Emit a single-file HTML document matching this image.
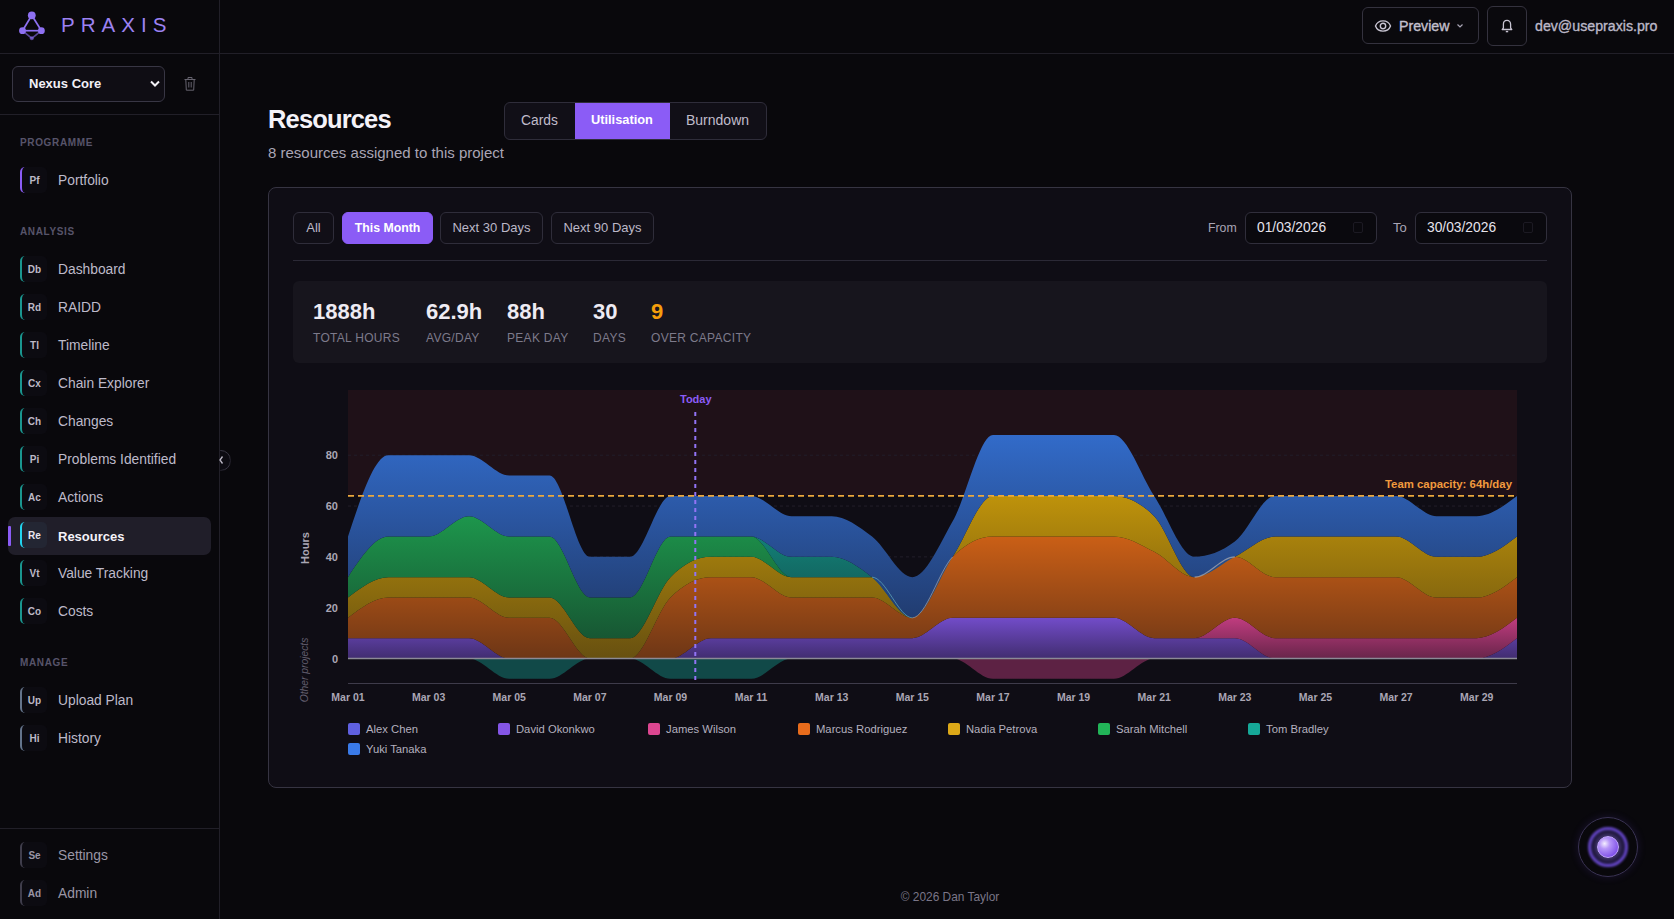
<!DOCTYPE html>
<html><head><meta charset="utf-8">
<style>
*{box-sizing:border-box;margin:0;padding:0}
html,body{width:1674px;height:919px;overflow:hidden;background:#09080c;font-family:"Liberation Sans",sans-serif;color:#e6e3ec}
.abs{position:absolute}
.t{position:absolute;white-space:nowrap;line-height:1}
#side{position:absolute;left:0;top:0;width:220px;height:919px;border-right:1px solid #211f28;background:#09080c}
.hline{position:absolute;height:1px;background:#211f28}
.sec{position:absolute;left:20px;font-size:10px;font-weight:bold;letter-spacing:0.65px;color:#57546a;line-height:1}
.nav{position:absolute;left:0;width:220px;height:38px}
.badge{position:absolute;left:20px;top:6px;width:27px;height:26px;border-left:2.5px solid #1a968f;border-radius:5px;background:#0c0b11}
.badge span{position:absolute;left:0;right:0;top:9px;text-align:center;font-size:10px;font-weight:bold;color:#bdb9c6;line-height:1}
.lbl{position:absolute;left:58px;top:13px;font-size:13.8px;color:#bebaca;line-height:1;white-space:nowrap}
.btn{position:absolute;border:1px solid #34323e;border-radius:6px;background:#0a090d}
.ftab{position:absolute;top:212px;height:32px;border:1px solid #2f2d3a;border-radius:6px;font-size:13px;color:#bcb8c8;text-align:center;line-height:30px;background:#110f17}
.stat-v{position:absolute;top:301px;font-size:22px;font-weight:bold;color:#eeebf3;line-height:1}
.stat-l{position:absolute;top:332px;font-size:12px;letter-spacing:0.3px;color:#7d7a8b;line-height:1;white-space:nowrap}
.leg{position:absolute;font-size:11.25px;color:#b4b0bf;line-height:1;white-space:nowrap}
.leg i{position:absolute;left:0;top:-1px;width:12px;height:12px;border-radius:2px}
.leg span{position:absolute;left:18px;top:0}
</style></head><body>


<div id="side">
  <svg class="abs" style="left:14px;top:6px" width="36" height="40" viewBox="14 6 36 40">
    <g stroke="#8e70f2" stroke-width="1.7" fill="none">
      <line x1="31.8" y1="15.3" x2="22.5" y2="30.7"/>
      <line x1="31.8" y1="15.3" x2="41.4" y2="30.7"/>
      <line x1="22.5" y1="30.7" x2="41.4" y2="30.7"/>
      <line x1="22.5" y1="30.7" x2="31.8" y2="38.3" stroke-opacity="0.6"/>
      <line x1="41.4" y1="30.7" x2="31.8" y2="38.3" stroke-opacity="0.6"/>
    </g>
    <circle cx="31.8" cy="15.3" r="3.9" fill="#8e70f2"/>
    <circle cx="22.5" cy="30.7" r="3.4" fill="#8e70f2"/>
    <circle cx="41.4" cy="30.7" r="3.4" fill="#8e70f2"/>
    <circle cx="31.8" cy="38.3" r="2" fill="#8b6cf0" fill-opacity="0.6"/>
  </svg>
  <div class="t" style="left:61px;top:15px;font-size:20.5px;letter-spacing:6.05px;color:#9c82f2">PRAXIS</div>

  <div class="abs" style="left:12px;top:66px;width:153px;height:36px;border:1px solid #383644;border-radius:6px;background:#0f0d14"></div>
  <div class="t" style="left:29px;top:77px;font-size:13px;font-weight:bold;color:#f2f0f6">Nexus Core</div>
  <svg class="abs" style="left:149px;top:79px" width="12" height="10" viewBox="0 0 12 10"><path d="M2 2.5 L6 6.5 L10 2.5" stroke="#f2f0f6" stroke-width="2" fill="none"/></svg>
  <svg class="abs" style="left:182px;top:75px" width="16" height="17" viewBox="0 0 16 17"><g stroke="#66636f" stroke-width="1" fill="none" stroke-linejoin="round"><path d="M2.5 4.5 H13.5"/><path d="M6 4.5 V2.5 H10 V4.5"/><path d="M3.8 4.5 L4.3 15.2 H11.7 L12.2 4.5"/><path d="M6.8 7 V12.5 M9.2 7 V12.5"/></g></svg>
  <div class="hline" style="left:0;top:114px;width:219px"></div>

  <div class="sec" style="top:138px">PROGRAMME</div>
  <div class="nav" style="top:161px"><div class="badge" style="border-left-color:#8b5cf6"><span>Pf</span></div><div class="lbl">Portfolio</div></div>

  <div class="sec" style="top:227px">ANALYSIS</div>
  <div class="nav" style="top:250px"><div class="badge"><span>Db</span></div><div class="lbl">Dashboard</div></div>
  <div class="nav" style="top:288px"><div class="badge"><span>Rd</span></div><div class="lbl">RAIDD</div></div>
  <div class="nav" style="top:326px"><div class="badge"><span>Tl</span></div><div class="lbl">Timeline</div></div>
  <div class="nav" style="top:364px"><div class="badge"><span>Cx</span></div><div class="lbl">Chain Explorer</div></div>
  <div class="nav" style="top:402px"><div class="badge"><span>Ch</span></div><div class="lbl">Changes</div></div>
  <div class="nav" style="top:440px"><div class="badge"><span>Pi</span></div><div class="lbl">Problems Identified</div></div>
  <div class="nav" style="top:478px"><div class="badge"><span>Ac</span></div><div class="lbl">Actions</div></div>
  <div class="abs" style="left:8px;top:517px;width:203px;height:38px;border-radius:7px;background:#201e29"></div>
  <div class="abs" style="left:8px;top:526px;width:3px;height:20px;border-radius:1px;background:#8b5cf6"></div>
  <div class="nav" style="top:516px"><div class="badge" style="border-left-color:#22d3ee;background:#232633"><span style="color:#e8e5ee">Re</span></div><div class="lbl" style="color:#f4f2f8;font-weight:bold;font-size:13px;top:13.5px">Resources</div></div>
  <div class="nav" style="top:554px"><div class="badge"><span>Vt</span></div><div class="lbl">Value Tracking</div></div>
  <div class="nav" style="top:592px"><div class="badge"><span>Co</span></div><div class="lbl">Costs</div></div>

  <div class="sec" style="top:658px">MANAGE</div>
  <div class="nav" style="top:681px"><div class="badge" style="border-left-color:#64748b"><span>Up</span></div><div class="lbl">Upload Plan</div></div>
  <div class="nav" style="top:719px"><div class="badge" style="border-left-color:#64748b"><span>Hi</span></div><div class="lbl">History</div></div>

  <div class="hline" style="left:0;top:828px;width:219px"></div>
  <div class="nav" style="top:836px"><div class="badge" style="border-left-color:#3f3d4b"><span style="color:#9a96a6">Se</span></div><div class="lbl" style="color:#9a96a6">Settings</div></div>
  <div class="nav" style="top:874px"><div class="badge" style="border-left-color:#3f3d4b"><span style="color:#9a96a6">Ad</span></div><div class="lbl" style="color:#9a96a6">Admin</div></div>
</div>
<!-- header line -->
<div class="hline" style="left:0;top:53px;width:1674px"></div>
<!-- collapse toggle -->
<div class="abs" style="left:210px;top:450px;width:20.5px;height:20.5px;border-radius:50%;border:1.2px solid #3a3846;background:#0c0b12;clip-path:inset(0 0 0 10px)"></div>
<svg class="abs" style="left:219px;top:453px" width="10" height="14" viewBox="0 0 10 14"><path d="M3.5 3.5 L1 7 L3.5 10.5" stroke="#bcb8c6" stroke-width="1.3" fill="none"/></svg>

<!-- header right -->
<div class="btn" style="left:1362px;top:7px;width:117px;height:37px"></div>
<svg class="abs" style="left:1374px;top:18px" width="18" height="16" viewBox="0 0 18 16"><path d="M1.5 8 C4 1.2 14 1.2 16.5 8 C14 14.8 4 14.8 1.5 8 Z" stroke="#c8c4d2" stroke-width="1.4" fill="none"/><circle cx="9" cy="8" r="2.7" stroke="#c8c4d2" stroke-width="1.4" fill="none"/></svg>
<div class="t" style="left:1399px;top:18.5px;font-size:14.2px;color:#c4c0ce;-webkit-text-stroke:0.35px #c4c0ce">Preview</div>
<svg class="abs" style="left:1455px;top:22px" width="10" height="8" viewBox="0 0 10 8"><path d="M2.5 2.5 L5 5 L7.5 2.5" stroke="#a8a4b4" stroke-width="1.2" fill="none"/></svg>
<div class="btn" style="left:1487px;top:6px;width:40px;height:40px"></div>
<svg class="abs" style="left:1499px;top:17px" width="16" height="18" viewBox="0 0 16 18"><path d="M3.2 12.5 H12.8 L11.6 10.8 V7.2 C11.6 4.9 10 3.3 8 3.3 C6 3.3 4.4 4.9 4.4 7.2 V10.8 Z" stroke="#c8c4d2" stroke-width="1.3" fill="none" stroke-linejoin="round"/><path d="M6.8 14.6 H9.2" stroke="#c8c4d2" stroke-width="1.4"/></svg>
<div class="t" style="left:1535px;top:18.5px;font-size:14.2px;color:#bcb8c8;-webkit-text-stroke:0.35px #bcb8c8">dev@usepraxis.pro</div>

<!-- title -->
<div class="t" style="left:268px;top:107px;font-size:25.5px;letter-spacing:-0.85px;font-weight:bold;color:#f4f2f8">Resources</div>
<div class="t" style="left:268px;top:145px;font-size:15px;color:#a9a5b5">8 resources assigned to this project</div>

<!-- tabs -->
<div class="abs" style="left:504px;top:102px;width:263px;height:38px;border:1px solid #2f2d3a;border-radius:6px;background:#110f17;overflow:hidden">
  <div class="abs" style="left:70px;top:0;width:95px;height:36px;background:#8b5cf6"></div>
</div>
<div class="t" style="left:521px;top:114px;font-size:13.8px;color:#c0bccb">Cards</div>
<div class="t" style="left:591px;top:114px;font-size:12.8px;font-weight:bold;color:#ffffff">Utilisation</div>
<div class="t" style="left:686px;top:113px;font-size:14px;color:#c0bccb">Burndown</div>

<!-- card -->
<div class="abs" style="left:268px;top:187px;width:1304px;height:601px;border:1px solid #363442;border-radius:8px;background:#0f0d15"></div>

<div class="ftab" style="left:293px;width:41px">All</div>
<div class="ftab" style="left:342px;width:91px;background:#8b5cf6;border-color:#8b5cf6;color:#fff;font-weight:bold;font-size:12.3px">This Month</div>
<div class="ftab" style="left:440px;width:103px">Next 30 Days</div>
<div class="ftab" style="left:551px;width:103px">Next 90 Days</div>

<div class="t" style="left:1208px;top:221.5px;font-size:12.3px;color:#a9a5b5">From</div>
<div class="abs" style="left:1245px;top:212px;width:132px;height:32px;border:1px solid #302e3b;border-radius:6px;background:#0a090e"></div>
<div class="t" style="left:1257px;top:221px;font-size:13.8px;color:#e6e3ec">01/03/2026</div>
<div class="abs" style="left:1353px;top:222px;width:10px;height:11px;border:1.5px solid #1c1a23;border-radius:2px"></div>
<div class="t" style="left:1393px;top:221px;font-size:13px;color:#a9a5b5">To</div>
<div class="abs" style="left:1415px;top:212px;width:132px;height:32px;border:1px solid #302e3b;border-radius:6px;background:#0a090e"></div>
<div class="t" style="left:1427px;top:221px;font-size:13.8px;color:#e6e3ec">30/03/2026</div>
<div class="abs" style="left:1523px;top:222px;width:10px;height:11px;border:1.5px solid #1c1a23;border-radius:2px"></div>

<div class="hline" style="left:293px;top:260px;width:1254px;background:#2b2936"></div>

<!-- stats -->
<div class="abs" style="left:293px;top:281px;width:1254px;height:82px;border-radius:6px;background:#17151d"></div>
<div class="stat-v" style="left:313px">1888h</div><div class="stat-l" style="left:313px">TOTAL HOURS</div>
<div class="stat-v" style="left:426px">62.9h</div><div class="stat-l" style="left:426px">AVG/DAY</div>
<div class="stat-v" style="left:507px">88h</div><div class="stat-l" style="left:507px">PEAK DAY</div>
<div class="stat-v" style="left:593px">30</div><div class="stat-l" style="left:593px">DAYS</div>
<div class="stat-v" style="left:651px;color:#f59e0b">9</div><div class="stat-l" style="left:651px">OVER CAPACITY</div>

<svg class="chart" width="1674" height="919" viewBox="0 0 1674 919" style="position:absolute;left:0;top:0;pointer-events:none">
<defs><linearGradient id="g_david" x1="0" y1="0" x2="0" y2="1"><stop offset="0" stop-color="#724cc9"/><stop offset="1" stop-color="#412d70"/></linearGradient><linearGradient id="g_james" x1="0" y1="0" x2="0" y2="1"><stop offset="0" stop-color="#c03c7f"/><stop offset="1" stop-color="#68254a"/></linearGradient><linearGradient id="g_marcus" x1="0" y1="0" x2="0" y2="1"><stop offset="0" stop-color="#ca5f16"/><stop offset="1" stop-color="#6d3616"/></linearGradient><linearGradient id="g_nadia" x1="0" y1="0" x2="0" y2="1"><stop offset="0" stop-color="#be920b"/><stop offset="1" stop-color="#675010"/></linearGradient><linearGradient id="g_sarah" x1="0" y1="0" x2="0" y2="1"><stop offset="0" stop-color="#1ea050"/><stop offset="1" stop-color="#175733"/></linearGradient><linearGradient id="g_tom" x1="0" y1="0" x2="0" y2="1"><stop offset="0" stop-color="#139689"/><stop offset="1" stop-color="#125250"/></linearGradient><linearGradient id="g_yuki" x1="0" y1="0" x2="0" y2="1"><stop offset="0" stop-color="#326bc9"/><stop offset="1" stop-color="#213c70"/></linearGradient><linearGradient id="g_ntom" x1="0" y1="0" x2="0" y2="1"><stop offset="0" stop-color="#114948"/><stop offset="1" stop-color="#114948"/></linearGradient><linearGradient id="g_njames" x1="0" y1="0" x2="0" y2="1"><stop offset="0" stop-color="#5d2244"/><stop offset="1" stop-color="#5d2244"/></linearGradient></defs>
<rect x="348" y="390" width="1169" height="105.88" fill="#ef4444" fill-opacity="0.075"/>
<line x1="348" x2="1517" y1="658.5" y2="658.5" stroke="#221e2a" stroke-dasharray="3 3" stroke-width="1"/>
<line x1="348" x2="1517" y1="607.68" y2="607.68" stroke="#221e2a" stroke-dasharray="3 3" stroke-width="1"/>
<line x1="348" x2="1517" y1="556.86" y2="556.86" stroke="#221e2a" stroke-dasharray="3 3" stroke-width="1"/>
<line x1="348" x2="1517" y1="506.04" y2="506.04" stroke="#221e2a" stroke-dasharray="3 3" stroke-width="1"/>
<line x1="348" x2="1517" y1="455.22" y2="455.22" stroke="#221e2a" stroke-dasharray="3 3" stroke-width="1"/>
<path d="M348,638.17C361.44,638.17 374.87,638.17 388.31,638.17C401.75,638.17 415.18,638.17 428.62,638.17C442.06,638.17 455.49,638.17 468.93,638.17C482.37,638.17 495.8,658.5 509.24,658.5C522.68,658.5 536.11,658.5 549.55,658.5C562.99,658.5 576.43,658.5 589.86,658.5C603.3,658.5 616.74,658.5 630.17,658.5C643.61,658.5 657.05,658.5 670.48,658.5C683.92,658.5 697.36,638.17 710.79,638.17C724.23,638.17 737.67,638.17 751.1,638.17C764.54,638.17 777.98,638.17 791.41,638.17C804.85,638.17 818.29,638.17 831.72,638.17C845.16,638.17 858.6,638.17 872.03,638.17C885.47,638.17 898.91,638.17 912.34,638.17C925.78,638.17 939.22,617.84 952.66,617.84C966.09,617.84 979.53,617.84 992.97,617.84C1006.4,617.84 1019.84,617.84 1033.28,617.84C1046.71,617.84 1060.15,617.84 1073.59,617.84C1087.02,617.84 1100.46,617.84 1113.9,617.84C1127.33,617.84 1140.77,638.17 1154.21,638.17C1167.64,638.17 1181.08,638.17 1194.52,638.17C1207.95,638.17 1221.39,638.17 1234.83,638.17C1248.26,638.17 1261.7,658.5 1275.14,658.5C1288.57,658.5 1302.01,658.5 1315.45,658.5C1328.89,658.5 1342.32,658.5 1355.76,658.5C1369.2,658.5 1382.63,658.5 1396.07,658.5C1409.51,658.5 1422.94,658.5 1436.38,658.5C1449.82,658.5 1463.25,658.5 1476.69,658.5C1490.13,658.5 1503.56,648.34 1517,638.17L1517,658.5C1503.56,658.5 1490.13,658.5 1476.69,658.5C1463.25,658.5 1449.82,658.5 1436.38,658.5C1422.94,658.5 1409.51,658.5 1396.07,658.5C1382.63,658.5 1369.2,658.5 1355.76,658.5C1342.32,658.5 1328.89,658.5 1315.45,658.5C1302.01,658.5 1288.57,658.5 1275.14,658.5C1261.7,658.5 1248.26,658.5 1234.83,658.5C1221.39,658.5 1207.95,658.5 1194.52,658.5C1181.08,658.5 1167.64,658.5 1154.21,658.5C1140.77,658.5 1127.33,658.5 1113.9,658.5C1100.46,658.5 1087.02,658.5 1073.59,658.5C1060.15,658.5 1046.71,658.5 1033.28,658.5C1019.84,658.5 1006.4,658.5 992.97,658.5C979.53,658.5 966.09,658.5 952.66,658.5C939.22,658.5 925.78,658.5 912.34,658.5C898.91,658.5 885.47,658.5 872.03,658.5C858.6,658.5 845.16,658.5 831.72,658.5C818.29,658.5 804.85,658.5 791.41,658.5C777.98,658.5 764.54,658.5 751.1,658.5C737.67,658.5 724.23,658.5 710.79,658.5C697.36,658.5 683.92,658.5 670.48,658.5C657.05,658.5 643.61,658.5 630.17,658.5C616.74,658.5 603.3,658.5 589.86,658.5C576.43,658.5 562.99,658.5 549.55,658.5C536.11,658.5 522.68,658.5 509.24,658.5C495.8,658.5 482.37,658.5 468.93,658.5C455.49,658.5 442.06,658.5 428.62,658.5C415.18,658.5 401.75,658.5 388.31,658.5C374.87,658.5 361.44,658.5 348,658.5Z" fill="url(#g_david)"/>
<path d="M348,638.17C361.44,638.17 374.87,638.17 388.31,638.17C401.75,638.17 415.18,638.17 428.62,638.17C442.06,638.17 455.49,638.17 468.93,638.17C482.37,638.17 495.8,658.5 509.24,658.5C522.68,658.5 536.11,658.5 549.55,658.5C562.99,658.5 576.43,658.5 589.86,658.5C603.3,658.5 616.74,658.5 630.17,658.5C643.61,658.5 657.05,658.5 670.48,658.5C683.92,658.5 697.36,638.17 710.79,638.17C724.23,638.17 737.67,638.17 751.1,638.17C764.54,638.17 777.98,638.17 791.41,638.17C804.85,638.17 818.29,638.17 831.72,638.17C845.16,638.17 858.6,638.17 872.03,638.17C885.47,638.17 898.91,638.17 912.34,638.17C925.78,638.17 939.22,617.84 952.66,617.84C966.09,617.84 979.53,617.84 992.97,617.84C1006.4,617.84 1019.84,617.84 1033.28,617.84C1046.71,617.84 1060.15,617.84 1073.59,617.84C1087.02,617.84 1100.46,617.84 1113.9,617.84C1127.33,617.84 1140.77,638.17 1154.21,638.17C1167.64,638.17 1181.08,638.17 1194.52,638.17C1207.95,638.17 1221.39,617.84 1234.83,617.84C1248.26,617.84 1261.7,638.17 1275.14,638.17C1288.57,638.17 1302.01,638.17 1315.45,638.17C1328.89,638.17 1342.32,638.17 1355.76,638.17C1369.2,638.17 1382.63,638.17 1396.07,638.17C1409.51,638.17 1422.94,638.17 1436.38,638.17C1449.82,638.17 1463.25,638.17 1476.69,638.17C1490.13,638.17 1503.56,628.01 1517,617.84L1517,638.17C1503.56,648.34 1490.13,658.5 1476.69,658.5C1463.25,658.5 1449.82,658.5 1436.38,658.5C1422.94,658.5 1409.51,658.5 1396.07,658.5C1382.63,658.5 1369.2,658.5 1355.76,658.5C1342.32,658.5 1328.89,658.5 1315.45,658.5C1302.01,658.5 1288.57,658.5 1275.14,658.5C1261.7,658.5 1248.26,638.17 1234.83,638.17C1221.39,638.17 1207.95,638.17 1194.52,638.17C1181.08,638.17 1167.64,638.17 1154.21,638.17C1140.77,638.17 1127.33,617.84 1113.9,617.84C1100.46,617.84 1087.02,617.84 1073.59,617.84C1060.15,617.84 1046.71,617.84 1033.28,617.84C1019.84,617.84 1006.4,617.84 992.97,617.84C979.53,617.84 966.09,617.84 952.66,617.84C939.22,617.84 925.78,638.17 912.34,638.17C898.91,638.17 885.47,638.17 872.03,638.17C858.6,638.17 845.16,638.17 831.72,638.17C818.29,638.17 804.85,638.17 791.41,638.17C777.98,638.17 764.54,638.17 751.1,638.17C737.67,638.17 724.23,638.17 710.79,638.17C697.36,638.17 683.92,658.5 670.48,658.5C657.05,658.5 643.61,658.5 630.17,658.5C616.74,658.5 603.3,658.5 589.86,658.5C576.43,658.5 562.99,658.5 549.55,658.5C536.11,658.5 522.68,658.5 509.24,658.5C495.8,658.5 482.37,638.17 468.93,638.17C455.49,638.17 442.06,638.17 428.62,638.17C415.18,638.17 401.75,638.17 388.31,638.17C374.87,638.17 361.44,638.17 348,638.17Z" fill="url(#g_james)"/>
<path d="M348,617.84C361.44,607.68 374.87,597.52 388.31,597.52C401.75,597.52 415.18,597.52 428.62,597.52C442.06,597.52 455.49,597.52 468.93,597.52C482.37,597.52 495.8,617.84 509.24,617.84C522.68,617.84 536.11,617.84 549.55,617.84C562.99,617.84 576.43,658.5 589.86,658.5C603.3,658.5 616.74,658.5 630.17,658.5C643.61,658.5 657.05,611.07 670.48,597.52C683.92,583.96 697.36,577.19 710.79,577.19C724.23,577.19 737.67,577.19 751.1,577.19C764.54,577.19 777.98,597.52 791.41,597.52C804.85,597.52 818.29,597.52 831.72,597.52C845.16,597.52 858.6,597.52 872.03,597.52C885.47,597.52 898.91,617.84 912.34,617.84C925.78,617.84 939.22,570.41 952.66,556.86C966.09,543.31 979.53,536.53 992.97,536.53C1006.4,536.53 1019.84,536.53 1033.28,536.53C1046.71,536.53 1060.15,536.53 1073.59,536.53C1087.02,536.53 1100.46,536.53 1113.9,536.53C1127.33,536.53 1140.77,545 1154.21,551.78C1167.64,558.55 1181.08,577.19 1194.52,577.19C1207.95,577.19 1221.39,556.86 1234.83,556.86C1248.26,556.86 1261.7,577.19 1275.14,577.19C1288.57,577.19 1302.01,577.19 1315.45,577.19C1328.89,577.19 1342.32,577.19 1355.76,577.19C1369.2,577.19 1382.63,577.19 1396.07,577.19C1409.51,577.19 1422.94,597.52 1436.38,597.52C1449.82,597.52 1463.25,597.52 1476.69,597.52C1490.13,597.52 1503.56,587.35 1517,577.19L1517,617.84C1503.56,628.01 1490.13,638.17 1476.69,638.17C1463.25,638.17 1449.82,638.17 1436.38,638.17C1422.94,638.17 1409.51,638.17 1396.07,638.17C1382.63,638.17 1369.2,638.17 1355.76,638.17C1342.32,638.17 1328.89,638.17 1315.45,638.17C1302.01,638.17 1288.57,638.17 1275.14,638.17C1261.7,638.17 1248.26,617.84 1234.83,617.84C1221.39,617.84 1207.95,638.17 1194.52,638.17C1181.08,638.17 1167.64,638.17 1154.21,638.17C1140.77,638.17 1127.33,617.84 1113.9,617.84C1100.46,617.84 1087.02,617.84 1073.59,617.84C1060.15,617.84 1046.71,617.84 1033.28,617.84C1019.84,617.84 1006.4,617.84 992.97,617.84C979.53,617.84 966.09,617.84 952.66,617.84C939.22,617.84 925.78,638.17 912.34,638.17C898.91,638.17 885.47,638.17 872.03,638.17C858.6,638.17 845.16,638.17 831.72,638.17C818.29,638.17 804.85,638.17 791.41,638.17C777.98,638.17 764.54,638.17 751.1,638.17C737.67,638.17 724.23,638.17 710.79,638.17C697.36,638.17 683.92,658.5 670.48,658.5C657.05,658.5 643.61,658.5 630.17,658.5C616.74,658.5 603.3,658.5 589.86,658.5C576.43,658.5 562.99,658.5 549.55,658.5C536.11,658.5 522.68,658.5 509.24,658.5C495.8,658.5 482.37,638.17 468.93,638.17C455.49,638.17 442.06,638.17 428.62,638.17C415.18,638.17 401.75,638.17 388.31,638.17C374.87,638.17 361.44,638.17 348,638.17Z" fill="url(#g_marcus)"/>
<path d="M348,597.52C361.44,587.35 374.87,577.19 388.31,577.19C401.75,577.19 415.18,577.19 428.62,577.19C442.06,577.19 455.49,577.19 468.93,577.19C482.37,577.19 495.8,597.52 509.24,597.52C522.68,597.52 536.11,597.52 549.55,597.52C562.99,597.52 576.43,638.17 589.86,638.17C603.3,638.17 616.74,638.17 630.17,638.17C643.61,638.17 657.05,590.74 670.48,577.19C683.92,563.64 697.36,556.86 710.79,556.86C724.23,556.86 737.67,556.86 751.1,556.86C764.54,556.86 777.98,577.19 791.41,577.19C804.85,577.19 818.29,577.19 831.72,577.19C845.16,577.19 858.6,577.19 872.03,577.19C885.47,577.19 898.91,617.84 912.34,617.84C925.78,617.84 939.22,577.19 952.66,556.86C966.09,536.53 979.53,495.88 992.97,495.88C1006.4,495.88 1019.84,495.88 1033.28,495.88C1046.71,495.88 1060.15,495.88 1073.59,495.88C1087.02,495.88 1100.46,495.88 1113.9,495.88C1127.33,495.88 1140.77,502.65 1154.21,516.2C1167.64,529.76 1181.08,577.19 1194.52,577.19C1207.95,577.19 1221.39,563.64 1234.83,556.86C1248.26,550.08 1261.7,536.53 1275.14,536.53C1288.57,536.53 1302.01,536.53 1315.45,536.53C1328.89,536.53 1342.32,536.53 1355.76,536.53C1369.2,536.53 1382.63,536.53 1396.07,536.53C1409.51,536.53 1422.94,556.86 1436.38,556.86C1449.82,556.86 1463.25,556.86 1476.69,556.86C1490.13,556.86 1503.56,546.7 1517,536.53L1517,577.19C1503.56,587.35 1490.13,597.52 1476.69,597.52C1463.25,597.52 1449.82,597.52 1436.38,597.52C1422.94,597.52 1409.51,577.19 1396.07,577.19C1382.63,577.19 1369.2,577.19 1355.76,577.19C1342.32,577.19 1328.89,577.19 1315.45,577.19C1302.01,577.19 1288.57,577.19 1275.14,577.19C1261.7,577.19 1248.26,556.86 1234.83,556.86C1221.39,556.86 1207.95,577.19 1194.52,577.19C1181.08,577.19 1167.64,558.55 1154.21,551.78C1140.77,545 1127.33,536.53 1113.9,536.53C1100.46,536.53 1087.02,536.53 1073.59,536.53C1060.15,536.53 1046.71,536.53 1033.28,536.53C1019.84,536.53 1006.4,536.53 992.97,536.53C979.53,536.53 966.09,543.31 952.66,556.86C939.22,570.41 925.78,617.84 912.34,617.84C898.91,617.84 885.47,597.52 872.03,597.52C858.6,597.52 845.16,597.52 831.72,597.52C818.29,597.52 804.85,597.52 791.41,597.52C777.98,597.52 764.54,577.19 751.1,577.19C737.67,577.19 724.23,577.19 710.79,577.19C697.36,577.19 683.92,583.96 670.48,597.52C657.05,611.07 643.61,658.5 630.17,658.5C616.74,658.5 603.3,658.5 589.86,658.5C576.43,658.5 562.99,617.84 549.55,617.84C536.11,617.84 522.68,617.84 509.24,617.84C495.8,617.84 482.37,597.52 468.93,597.52C455.49,597.52 442.06,597.52 428.62,597.52C415.18,597.52 401.75,597.52 388.31,597.52C374.87,597.52 361.44,607.68 348,617.84Z" fill="url(#g_nadia)"/>
<path d="M348,577.19C361.44,556.86 374.87,536.53 388.31,536.53C401.75,536.53 415.18,536.53 428.62,536.53C442.06,536.53 455.49,516.2 468.93,516.2C482.37,516.2 495.8,536.53 509.24,536.53C522.68,536.53 536.11,536.53 549.55,536.53C562.99,536.53 576.43,597.52 589.86,597.52C603.3,597.52 616.74,597.52 630.17,597.52C643.61,597.52 657.05,536.53 670.48,536.53C683.92,536.53 697.36,536.53 710.79,536.53C724.23,536.53 737.67,536.53 751.1,536.53C764.54,536.53 777.98,577.19 791.41,577.19C804.85,577.19 818.29,577.19 831.72,577.19C845.16,577.19 858.6,577.19 872.03,577.19C885.47,577.19 898.91,617.84 912.34,617.84C925.78,617.84 939.22,577.19 952.66,556.86C966.09,536.53 979.53,495.88 992.97,495.88C1006.4,495.88 1019.84,495.88 1033.28,495.88C1046.71,495.88 1060.15,495.88 1073.59,495.88C1087.02,495.88 1100.46,495.88 1113.9,495.88C1127.33,495.88 1140.77,502.65 1154.21,516.2C1167.64,529.76 1181.08,577.19 1194.52,577.19C1207.95,577.19 1221.39,563.64 1234.83,556.86C1248.26,550.08 1261.7,536.53 1275.14,536.53C1288.57,536.53 1302.01,536.53 1315.45,536.53C1328.89,536.53 1342.32,536.53 1355.76,536.53C1369.2,536.53 1382.63,536.53 1396.07,536.53C1409.51,536.53 1422.94,556.86 1436.38,556.86C1449.82,556.86 1463.25,556.86 1476.69,556.86C1490.13,556.86 1503.56,546.7 1517,536.53L1517,536.53C1503.56,546.7 1490.13,556.86 1476.69,556.86C1463.25,556.86 1449.82,556.86 1436.38,556.86C1422.94,556.86 1409.51,536.53 1396.07,536.53C1382.63,536.53 1369.2,536.53 1355.76,536.53C1342.32,536.53 1328.89,536.53 1315.45,536.53C1302.01,536.53 1288.57,536.53 1275.14,536.53C1261.7,536.53 1248.26,550.08 1234.83,556.86C1221.39,563.64 1207.95,577.19 1194.52,577.19C1181.08,577.19 1167.64,529.76 1154.21,516.2C1140.77,502.65 1127.33,495.88 1113.9,495.88C1100.46,495.88 1087.02,495.88 1073.59,495.88C1060.15,495.88 1046.71,495.88 1033.28,495.88C1019.84,495.88 1006.4,495.88 992.97,495.88C979.53,495.88 966.09,536.53 952.66,556.86C939.22,577.19 925.78,617.84 912.34,617.84C898.91,617.84 885.47,577.19 872.03,577.19C858.6,577.19 845.16,577.19 831.72,577.19C818.29,577.19 804.85,577.19 791.41,577.19C777.98,577.19 764.54,556.86 751.1,556.86C737.67,556.86 724.23,556.86 710.79,556.86C697.36,556.86 683.92,563.64 670.48,577.19C657.05,590.74 643.61,638.17 630.17,638.17C616.74,638.17 603.3,638.17 589.86,638.17C576.43,638.17 562.99,597.52 549.55,597.52C536.11,597.52 522.68,597.52 509.24,597.52C495.8,597.52 482.37,577.19 468.93,577.19C455.49,577.19 442.06,577.19 428.62,577.19C415.18,577.19 401.75,577.19 388.31,577.19C374.87,577.19 361.44,587.35 348,597.52Z" fill="url(#g_sarah)"/>
<path d="M348,577.19C361.44,556.86 374.87,536.53 388.31,536.53C401.75,536.53 415.18,536.53 428.62,536.53C442.06,536.53 455.49,516.2 468.93,516.2C482.37,516.2 495.8,536.53 509.24,536.53C522.68,536.53 536.11,536.53 549.55,536.53C562.99,536.53 576.43,597.52 589.86,597.52C603.3,597.52 616.74,597.52 630.17,597.52C643.61,597.52 657.05,536.53 670.48,536.53C683.92,536.53 697.36,536.53 710.79,536.53C724.23,536.53 737.67,536.53 751.1,536.53C764.54,536.53 777.98,556.86 791.41,556.86C804.85,556.86 818.29,556.86 831.72,556.86C845.16,556.86 858.6,567.02 872.03,577.19C885.47,587.35 898.91,617.84 912.34,617.84C925.78,617.84 939.22,577.19 952.66,556.86C966.09,536.53 979.53,495.88 992.97,495.88C1006.4,495.88 1019.84,495.88 1033.28,495.88C1046.71,495.88 1060.15,495.88 1073.59,495.88C1087.02,495.88 1100.46,495.88 1113.9,495.88C1127.33,495.88 1140.77,502.65 1154.21,516.2C1167.64,529.76 1181.08,577.19 1194.52,577.19C1207.95,577.19 1221.39,563.64 1234.83,556.86C1248.26,550.08 1261.7,536.53 1275.14,536.53C1288.57,536.53 1302.01,536.53 1315.45,536.53C1328.89,536.53 1342.32,536.53 1355.76,536.53C1369.2,536.53 1382.63,536.53 1396.07,536.53C1409.51,536.53 1422.94,556.86 1436.38,556.86C1449.82,556.86 1463.25,556.86 1476.69,556.86C1490.13,556.86 1503.56,546.7 1517,536.53L1517,536.53C1503.56,546.7 1490.13,556.86 1476.69,556.86C1463.25,556.86 1449.82,556.86 1436.38,556.86C1422.94,556.86 1409.51,536.53 1396.07,536.53C1382.63,536.53 1369.2,536.53 1355.76,536.53C1342.32,536.53 1328.89,536.53 1315.45,536.53C1302.01,536.53 1288.57,536.53 1275.14,536.53C1261.7,536.53 1248.26,550.08 1234.83,556.86C1221.39,563.64 1207.95,577.19 1194.52,577.19C1181.08,577.19 1167.64,529.76 1154.21,516.2C1140.77,502.65 1127.33,495.88 1113.9,495.88C1100.46,495.88 1087.02,495.88 1073.59,495.88C1060.15,495.88 1046.71,495.88 1033.28,495.88C1019.84,495.88 1006.4,495.88 992.97,495.88C979.53,495.88 966.09,536.53 952.66,556.86C939.22,577.19 925.78,617.84 912.34,617.84C898.91,617.84 885.47,577.19 872.03,577.19C858.6,577.19 845.16,577.19 831.72,577.19C818.29,577.19 804.85,577.19 791.41,577.19C777.98,577.19 764.54,536.53 751.1,536.53C737.67,536.53 724.23,536.53 710.79,536.53C697.36,536.53 683.92,536.53 670.48,536.53C657.05,536.53 643.61,597.52 630.17,597.52C616.74,597.52 603.3,597.52 589.86,597.52C576.43,597.52 562.99,536.53 549.55,536.53C536.11,536.53 522.68,536.53 509.24,536.53C495.8,536.53 482.37,516.2 468.93,516.2C455.49,516.2 442.06,536.53 428.62,536.53C415.18,536.53 401.75,536.53 388.31,536.53C374.87,536.53 361.44,556.86 348,577.19Z" fill="url(#g_tom)"/>
<path d="M348,536.53C361.44,495.88 374.87,455.22 388.31,455.22C401.75,455.22 415.18,455.22 428.62,455.22C442.06,455.22 455.49,455.22 468.93,455.22C482.37,455.22 495.8,475.55 509.24,475.55C522.68,475.55 536.11,475.55 549.55,475.55C562.99,475.55 576.43,556.86 589.86,556.86C603.3,556.86 616.74,556.86 630.17,556.86C643.61,556.86 657.05,495.88 670.48,495.88C683.92,495.88 697.36,495.88 710.79,495.88C724.23,495.88 737.67,495.88 751.1,495.88C764.54,495.88 777.98,516.2 791.41,516.2C804.85,516.2 818.29,516.2 831.72,516.2C845.16,516.2 858.6,526.37 872.03,536.53C885.47,546.7 898.91,577.19 912.34,577.19C925.78,577.19 939.22,545 952.66,521.29C966.09,497.57 979.53,434.89 992.97,434.89C1006.4,434.89 1019.84,434.89 1033.28,434.89C1046.71,434.89 1060.15,434.89 1073.59,434.89C1087.02,434.89 1100.46,434.89 1113.9,434.89C1127.33,434.89 1140.77,475.55 1154.21,495.88C1167.64,516.2 1181.08,556.86 1194.52,556.86C1207.95,556.86 1221.39,551.78 1234.83,541.61C1248.26,531.45 1261.7,495.88 1275.14,495.88C1288.57,495.88 1302.01,495.88 1315.45,495.88C1328.89,495.88 1342.32,495.88 1355.76,495.88C1369.2,495.88 1382.63,495.88 1396.07,495.88C1409.51,495.88 1422.94,516.2 1436.38,516.2C1449.82,516.2 1463.25,516.2 1476.69,516.2C1490.13,516.2 1503.56,506.04 1517,495.88L1517,536.53C1503.56,546.7 1490.13,556.86 1476.69,556.86C1463.25,556.86 1449.82,556.86 1436.38,556.86C1422.94,556.86 1409.51,536.53 1396.07,536.53C1382.63,536.53 1369.2,536.53 1355.76,536.53C1342.32,536.53 1328.89,536.53 1315.45,536.53C1302.01,536.53 1288.57,536.53 1275.14,536.53C1261.7,536.53 1248.26,550.08 1234.83,556.86C1221.39,563.64 1207.95,577.19 1194.52,577.19C1181.08,577.19 1167.64,529.76 1154.21,516.2C1140.77,502.65 1127.33,495.88 1113.9,495.88C1100.46,495.88 1087.02,495.88 1073.59,495.88C1060.15,495.88 1046.71,495.88 1033.28,495.88C1019.84,495.88 1006.4,495.88 992.97,495.88C979.53,495.88 966.09,536.53 952.66,556.86C939.22,577.19 925.78,617.84 912.34,617.84C898.91,617.84 885.47,587.35 872.03,577.19C858.6,567.02 845.16,556.86 831.72,556.86C818.29,556.86 804.85,556.86 791.41,556.86C777.98,556.86 764.54,536.53 751.1,536.53C737.67,536.53 724.23,536.53 710.79,536.53C697.36,536.53 683.92,536.53 670.48,536.53C657.05,536.53 643.61,597.52 630.17,597.52C616.74,597.52 603.3,597.52 589.86,597.52C576.43,597.52 562.99,536.53 549.55,536.53C536.11,536.53 522.68,536.53 509.24,536.53C495.8,536.53 482.37,516.2 468.93,516.2C455.49,516.2 442.06,536.53 428.62,536.53C415.18,536.53 401.75,536.53 388.31,536.53C374.87,536.53 361.44,556.86 348,577.19Z" fill="url(#g_yuki)"/>
<path d="M348,658.5C361.44,658.5 374.87,658.5 388.31,658.5C401.75,658.5 415.18,658.5 428.62,658.5C442.06,658.5 455.49,658.5 468.93,658.5C482.37,658.5 495.8,658.5 509.24,658.5C522.68,658.5 536.11,658.5 549.55,658.5C562.99,658.5 576.43,658.5 589.86,658.5C603.3,658.5 616.74,658.5 630.17,658.5C643.61,658.5 657.05,658.5 670.48,658.5C683.92,658.5 697.36,658.5 710.79,658.5C724.23,658.5 737.67,658.5 751.1,658.5C764.54,658.5 777.98,658.5 791.41,658.5C804.85,658.5 818.29,658.5 831.72,658.5C845.16,658.5 858.6,658.5 872.03,658.5C885.47,658.5 898.91,658.5 912.34,658.5C925.78,658.5 939.22,658.5 952.66,658.5C966.09,658.5 979.53,658.5 992.97,658.5C1006.4,658.5 1019.84,658.5 1033.28,658.5C1046.71,658.5 1060.15,658.5 1073.59,658.5C1087.02,658.5 1100.46,658.5 1113.9,658.5C1127.33,658.5 1140.77,658.5 1154.21,658.5C1167.64,658.5 1181.08,658.5 1194.52,658.5C1207.95,658.5 1221.39,658.5 1234.83,658.5C1248.26,658.5 1261.7,658.5 1275.14,658.5C1288.57,658.5 1302.01,658.5 1315.45,658.5C1328.89,658.5 1342.32,658.5 1355.76,658.5C1369.2,658.5 1382.63,658.5 1396.07,658.5C1409.51,658.5 1422.94,658.5 1436.38,658.5C1449.82,658.5 1463.25,658.5 1476.69,658.5C1490.13,658.5 1503.56,658.5 1517,658.5L1517,658.5C1503.56,658.5 1490.13,658.5 1476.69,658.5C1463.25,658.5 1449.82,658.5 1436.38,658.5C1422.94,658.5 1409.51,658.5 1396.07,658.5C1382.63,658.5 1369.2,658.5 1355.76,658.5C1342.32,658.5 1328.89,658.5 1315.45,658.5C1302.01,658.5 1288.57,658.5 1275.14,658.5C1261.7,658.5 1248.26,658.5 1234.83,658.5C1221.39,658.5 1207.95,658.5 1194.52,658.5C1181.08,658.5 1167.64,658.5 1154.21,658.5C1140.77,658.5 1127.33,658.5 1113.9,658.5C1100.46,658.5 1087.02,658.5 1073.59,658.5C1060.15,658.5 1046.71,658.5 1033.28,658.5C1019.84,658.5 1006.4,658.5 992.97,658.5C979.53,658.5 966.09,658.5 952.66,658.5C939.22,658.5 925.78,658.5 912.34,658.5C898.91,658.5 885.47,658.5 872.03,658.5C858.6,658.5 845.16,658.5 831.72,658.5C818.29,658.5 804.85,658.5 791.41,658.5C777.98,658.5 764.54,678.83 751.1,678.83C737.67,678.83 724.23,678.83 710.79,678.83C697.36,678.83 683.92,678.83 670.48,678.83C657.05,678.83 643.61,658.5 630.17,658.5C616.74,658.5 603.3,658.5 589.86,658.5C576.43,658.5 562.99,678.83 549.55,678.83C536.11,678.83 522.68,678.83 509.24,678.83C495.8,678.83 482.37,658.5 468.93,658.5C455.49,658.5 442.06,658.5 428.62,658.5C415.18,658.5 401.75,658.5 388.31,658.5C374.87,658.5 361.44,658.5 348,658.5Z" fill="url(#g_ntom)"/>
<path d="M348,658.5C361.44,658.5 374.87,658.5 388.31,658.5C401.75,658.5 415.18,658.5 428.62,658.5C442.06,658.5 455.49,658.5 468.93,658.5C482.37,658.5 495.8,658.5 509.24,658.5C522.68,658.5 536.11,658.5 549.55,658.5C562.99,658.5 576.43,658.5 589.86,658.5C603.3,658.5 616.74,658.5 630.17,658.5C643.61,658.5 657.05,658.5 670.48,658.5C683.92,658.5 697.36,658.5 710.79,658.5C724.23,658.5 737.67,658.5 751.1,658.5C764.54,658.5 777.98,658.5 791.41,658.5C804.85,658.5 818.29,658.5 831.72,658.5C845.16,658.5 858.6,658.5 872.03,658.5C885.47,658.5 898.91,658.5 912.34,658.5C925.78,658.5 939.22,658.5 952.66,658.5C966.09,658.5 979.53,658.5 992.97,658.5C1006.4,658.5 1019.84,658.5 1033.28,658.5C1046.71,658.5 1060.15,658.5 1073.59,658.5C1087.02,658.5 1100.46,658.5 1113.9,658.5C1127.33,658.5 1140.77,658.5 1154.21,658.5C1167.64,658.5 1181.08,658.5 1194.52,658.5C1207.95,658.5 1221.39,658.5 1234.83,658.5C1248.26,658.5 1261.7,658.5 1275.14,658.5C1288.57,658.5 1302.01,658.5 1315.45,658.5C1328.89,658.5 1342.32,658.5 1355.76,658.5C1369.2,658.5 1382.63,658.5 1396.07,658.5C1409.51,658.5 1422.94,658.5 1436.38,658.5C1449.82,658.5 1463.25,658.5 1476.69,658.5C1490.13,658.5 1503.56,658.5 1517,658.5L1517,658.5C1503.56,658.5 1490.13,658.5 1476.69,658.5C1463.25,658.5 1449.82,658.5 1436.38,658.5C1422.94,658.5 1409.51,658.5 1396.07,658.5C1382.63,658.5 1369.2,658.5 1355.76,658.5C1342.32,658.5 1328.89,658.5 1315.45,658.5C1302.01,658.5 1288.57,658.5 1275.14,658.5C1261.7,658.5 1248.26,658.5 1234.83,658.5C1221.39,658.5 1207.95,658.5 1194.52,658.5C1181.08,658.5 1167.64,658.5 1154.21,658.5C1140.77,658.5 1127.33,678.83 1113.9,678.83C1100.46,678.83 1087.02,678.83 1073.59,678.83C1060.15,678.83 1046.71,678.83 1033.28,678.83C1019.84,678.83 1006.4,678.83 992.97,678.83C979.53,678.83 966.09,658.5 952.66,658.5C939.22,658.5 925.78,658.5 912.34,658.5C898.91,658.5 885.47,658.5 872.03,658.5C858.6,658.5 845.16,658.5 831.72,658.5C818.29,658.5 804.85,658.5 791.41,658.5C777.98,658.5 764.54,658.5 751.1,658.5C737.67,658.5 724.23,658.5 710.79,658.5C697.36,658.5 683.92,658.5 670.48,658.5C657.05,658.5 643.61,658.5 630.17,658.5C616.74,658.5 603.3,658.5 589.86,658.5C576.43,658.5 562.99,658.5 549.55,658.5C536.11,658.5 522.68,658.5 509.24,658.5C495.8,658.5 482.37,658.5 468.93,658.5C455.49,658.5 442.06,658.5 428.62,658.5C415.18,658.5 401.75,658.5 388.31,658.5C374.87,658.5 361.44,658.5 348,658.5Z" fill="url(#g_njames)"/>

<path d="M872.03,577.19C885.47,577.19 898.91,617.84 912.34,617.84" fill="none" stroke="#6cc0c8" stroke-width="1" stroke-opacity="0.6"/><path d="M912.34,617.84C925.78,617.84 939.22,570.41 952.66,556.86" fill="none" stroke="#c8c0b8" stroke-width="1" stroke-opacity="0.55"/><path d="M1194.52,577.19C1207.95,577.19 1221.39,556.86 1234.83,556.86" fill="none" stroke="#c8c0b8" stroke-width="1.3" stroke-opacity="0.6"/>
<line x1="348" x2="1517" y1="658.5" y2="658.5" stroke="#8c8a96" stroke-width="1.5"/>
<line x1="348" x2="1517" y1="683.5" y2="683.5" stroke="#3e3b4a" stroke-width="1"/>
<line x1="348" x2="1517" y1="495.88" y2="495.88" stroke="#eaa83c" stroke-width="1.8" stroke-dasharray="6 4"/>
<text x="1512" y="488" text-anchor="end" font-family="Liberation Sans" font-size="11.4" font-weight="bold" fill="#f09a3e">Team capacity: 64h/day</text>
<line x1="695.3" x2="695.3" y1="412" y2="683" stroke="#9274f6" stroke-width="2" stroke-dasharray="4 4"/>
<text x="695.8" y="403" text-anchor="middle" font-family="Liberation Sans" font-size="11" font-weight="bold" fill="#8b5cf6">Today</text>
<text x="338" y="662.5" text-anchor="end" font-family="Liberation Sans" font-size="11" font-weight="bold" fill="#aaa6b4">0</text>
<text x="338" y="611.68" text-anchor="end" font-family="Liberation Sans" font-size="11" font-weight="bold" fill="#aaa6b4">20</text>
<text x="338" y="560.86" text-anchor="end" font-family="Liberation Sans" font-size="11" font-weight="bold" fill="#aaa6b4">40</text>
<text x="338" y="510.04" text-anchor="end" font-family="Liberation Sans" font-size="11" font-weight="bold" fill="#aaa6b4">60</text>
<text x="338" y="459.22" text-anchor="end" font-family="Liberation Sans" font-size="11" font-weight="bold" fill="#aaa6b4">80</text>
<text transform="translate(308.5,548) rotate(-90)" text-anchor="middle" font-family="Liberation Sans" font-size="11" font-weight="bold" fill="#aaa6b4">Hours</text>
<text transform="translate(308,670) rotate(-90)" text-anchor="middle" font-family="Liberation Sans" font-size="10.3" font-style="italic" fill="#625e6e">Other projects</text>
<text x="348" y="701" text-anchor="middle" font-family="Liberation Sans" font-size="10.5" font-weight="bold" fill="#aaa6b4">Mar 01</text>
<text x="428.62" y="701" text-anchor="middle" font-family="Liberation Sans" font-size="10.5" font-weight="bold" fill="#aaa6b4">Mar 03</text>
<text x="509.24" y="701" text-anchor="middle" font-family="Liberation Sans" font-size="10.5" font-weight="bold" fill="#aaa6b4">Mar 05</text>
<text x="589.86" y="701" text-anchor="middle" font-family="Liberation Sans" font-size="10.5" font-weight="bold" fill="#aaa6b4">Mar 07</text>
<text x="670.48" y="701" text-anchor="middle" font-family="Liberation Sans" font-size="10.5" font-weight="bold" fill="#aaa6b4">Mar 09</text>
<text x="751.1" y="701" text-anchor="middle" font-family="Liberation Sans" font-size="10.5" font-weight="bold" fill="#aaa6b4">Mar 11</text>
<text x="831.72" y="701" text-anchor="middle" font-family="Liberation Sans" font-size="10.5" font-weight="bold" fill="#aaa6b4">Mar 13</text>
<text x="912.34" y="701" text-anchor="middle" font-family="Liberation Sans" font-size="10.5" font-weight="bold" fill="#aaa6b4">Mar 15</text>
<text x="992.97" y="701" text-anchor="middle" font-family="Liberation Sans" font-size="10.5" font-weight="bold" fill="#aaa6b4">Mar 17</text>
<text x="1073.59" y="701" text-anchor="middle" font-family="Liberation Sans" font-size="10.5" font-weight="bold" fill="#aaa6b4">Mar 19</text>
<text x="1154.21" y="701" text-anchor="middle" font-family="Liberation Sans" font-size="10.5" font-weight="bold" fill="#aaa6b4">Mar 21</text>
<text x="1234.83" y="701" text-anchor="middle" font-family="Liberation Sans" font-size="10.5" font-weight="bold" fill="#aaa6b4">Mar 23</text>
<text x="1315.45" y="701" text-anchor="middle" font-family="Liberation Sans" font-size="10.5" font-weight="bold" fill="#aaa6b4">Mar 25</text>
<text x="1396.07" y="701" text-anchor="middle" font-family="Liberation Sans" font-size="10.5" font-weight="bold" fill="#aaa6b4">Mar 27</text>
<text x="1476.69" y="701" text-anchor="middle" font-family="Liberation Sans" font-size="10.5" font-weight="bold" fill="#aaa6b4">Mar 29</text>
</svg>

<!-- legend -->
<div class="leg" style="left:348px;top:724px"><i style="background:#5f60e0"></i><span>Alex Chen</span></div>
<div class="leg" style="left:498px;top:724px"><i style="background:#8455e6"></i><span>David Okonkwo</span></div>
<div class="leg" style="left:648px;top:724px"><i style="background:#dc4690"></i><span>James Wilson</span></div>
<div class="leg" style="left:798px;top:724px"><i style="background:#e86c1c"></i><span>Marcus Rodriguez</span></div>
<div class="leg" style="left:948px;top:724px"><i style="background:#dca818"></i><span>Nadia Petrova</span></div>
<div class="leg" style="left:1098px;top:724px"><i style="background:#22b458"></i><span>Sarah Mitchell</span></div>
<div class="leg" style="left:1248px;top:724px"><i style="background:#16a898"></i><span>Tom Bradley</span></div>
<div class="leg" style="left:348px;top:744px"><i style="background:#3a7ae8"></i><span>Yuki Tanaka</span></div>

<div class="t" style="left:950px;top:892px;transform:translateX(-50%);font-size:11.9px;color:#7a7688">© 2026 Dan Taylor</div>

<!-- orb -->
<div class="abs" style="left:1578px;top:817px;width:60px;height:60px;border-radius:50%;border:1.5px solid #3a3354;box-shadow:0 0 8px rgba(90,60,180,0.2)"></div>
<div class="abs" style="left:1588px;top:827px;width:40px;height:40px;border-radius:50%;border:3.5px solid #6446c4;background:#1c1538;filter:blur(1.3px)"></div>
<div class="abs" style="left:1597px;top:836px;width:22px;height:22px;border-radius:50%;border:1.5px solid #c4a8ff;background:radial-gradient(circle at 33% 33%,#f4eeff 0%,#b796f8 28%,#7a4ae6 80%);box-shadow:0 0 6px rgba(167,139,250,0.6)"></div>
</body></html>
